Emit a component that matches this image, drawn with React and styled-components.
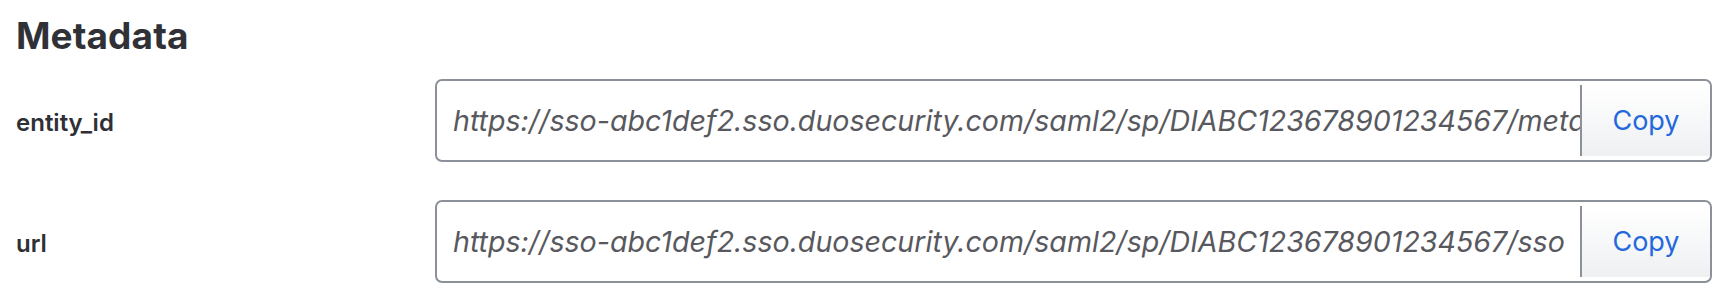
import React from "react";
import styled, { createGlobalStyle } from "styled-components";

const Global = createGlobalStyle`
  html, body { margin: 0; padding: 0; background: #ffffff; }
  body { font-family: Inter, "Noto Sans", sans-serif; }
  * { box-sizing: border-box; }
`;

const Page = styled.div`
  padding: 14px 18px 0 16px;
  width: 1730px;
`;

const Heading = styled.h2`
  margin: 0 0 21px 0;
  font-family: Inter, sans-serif;
  font-weight: 700;
  font-size: 37px;
  line-height: 44px;
  color: #2f3137;
  letter-spacing: 0.1px;
`;

const Rows = styled.div`
  display: flex;
  flex-direction: column;
  gap: 38px;
`;

const Row = styled.div`
  display: grid;
  grid-template-columns: 419px 1fr;
  align-items: center;
`;

const Label = styled.div`
  font-family: Inter, sans-serif;
  font-weight: 600;
  font-size: 24px;
  color: #2e3036;
  padding-top: 4px;
`;

const Field = styled.div`
  display: flex;
  align-items: stretch;
  height: 83px;
  border: 2px solid #8b9099;
  border-radius: 7px;
  background: #ffffff;
  overflow: hidden;
`;

const Value = styled.div`
  flex: 1;
  min-width: 0;
  display: flex;
  align-items: center;
  padding-left: 16px;
  font-family: Inter, sans-serif;
  font-style: italic;
  font-size: 28.6px;
  color: #58595e;
  white-space: nowrap;
  overflow: hidden;
`;

const CopyButton = styled.button`
  flex: 0 0 130px;
  margin: 4px 0;
  border: none;
  border-left: 2px solid #8b9099;
  background: linear-gradient(#ffffff, #eef0f2);
  color: #2468dc;
  font-family: Inter, sans-serif;
  font-size: 27px;
  cursor: pointer;
  padding: 0;
`;

const rows = [
  {
    label: "entity_id",
    value:
      "https://sso-abc1def2.sso.duosecurity.com/saml2/sp/DIABC123678901234567/metadata",
  },
  {
    label: "url",
    value: "https://sso-abc1def2.sso.duosecurity.com/saml2/sp/DIABC123678901234567/sso",
  },
];

export default function App() {
  return (
    <>
      <Global />
      <Page>
        <Heading>Metadata</Heading>
        <Rows>
          {rows.map((r) => (
            <Row key={r.label}>
              <Label>{r.label}</Label>
              <Field>
                <Value>{r.value}</Value>
                <CopyButton>Copy</CopyButton>
              </Field>
            </Row>
          ))}
        </Rows>
      </Page>
    </>
  );
}
